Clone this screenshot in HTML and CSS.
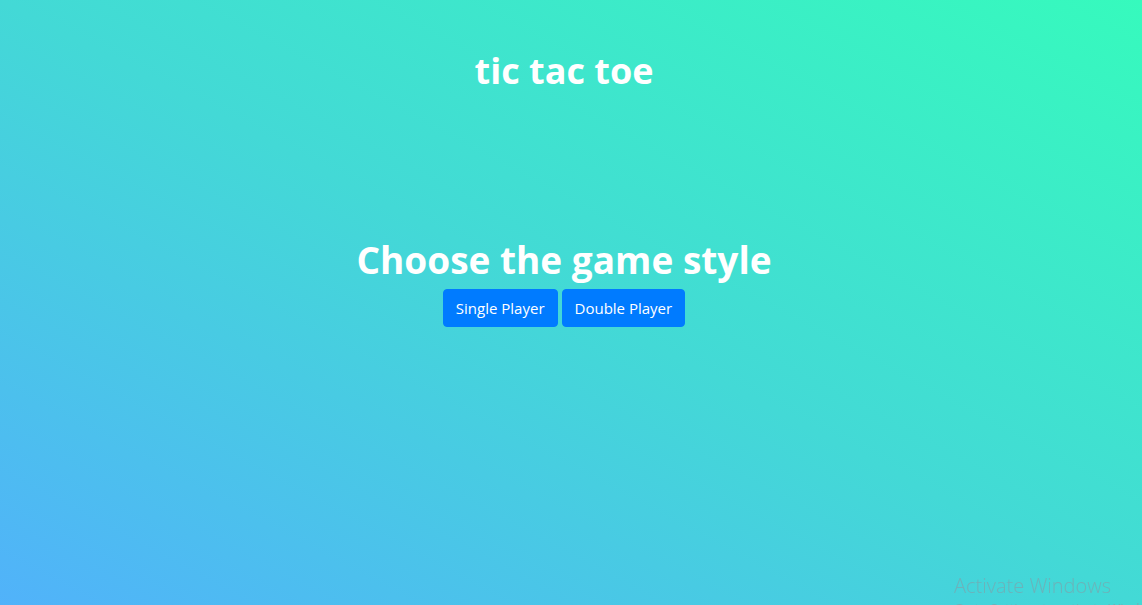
FILE: index.html
```html
<!DOCTYPE html>
<html lang="en">
<head>
<meta charset="utf-8">
<title>tic tac toe</title>
<link rel="stylesheet" href="styles.css">
</head>
<body>
<div class="page">
  <h2 class="title">tic tac toe</h2>
  <section class="chooser">
    <h1 class="chooser-heading">Choose the game style</h1>
    <div class="chooser-buttons">
      <button class="btn">Single Player</button>
      <button class="btn">Double Player</button>
    </div>
  </section>
</div>
<div class="watermark">
  <div class="wm-title">Activate Windows</div>
  <div class="wm-sub">Go to Settings to activate Windows.</div>
</div>
</body>
</html>
```
FILE: styles.css
```css
html, body {
  margin: 0;
  height: 100%;
}
body {
  font-family: "Open Sans", "Noto Sans", sans-serif;
  background: linear-gradient(to top right, #51b2fa 0%, #43d9d6 50%, #36fabd 100%);
  color: #fff;
  overflow: hidden;
}
.page {
  display: flex;
  flex-direction: column;
  align-items: center;
  padding-right: 14px;
}
.title {
  margin: 47px 0 0;
  font-size: 36px;
  font-weight: 700;
  line-height: 48px;
}
.chooser {
  margin-top: 139px;
  display: flex;
  flex-direction: column;
  align-items: center;
}
.chooser-heading {
  margin: 0;
  font-size: 37px;
  font-weight: 700;
  line-height: 52px;
}
.chooser-buttons {
  display: flex;
  gap: 4px;
  margin-top: 3px;
}
.btn {
  font-family: "Open Sans", "Noto Sans", sans-serif;
  font-size: 15px;
  line-height: 24px;
  padding: 6px 12px;
  background: #007bff;
  color: #fff;
  border: 1px solid #007bff;
  border-radius: 4px;
}
.watermark {
  position: fixed;
  left: 954px;
  top: 573px;
  color: rgba(140, 150, 160, 0.55);
  font-family: "Open Sans", sans-serif;
  white-space: nowrap;
}
.wm-title {
  font-size: 20px;
  font-weight: 300;
  line-height: 26px;
}
.wm-sub {
  font-size: 13px;
  line-height: 18px;
}
```
